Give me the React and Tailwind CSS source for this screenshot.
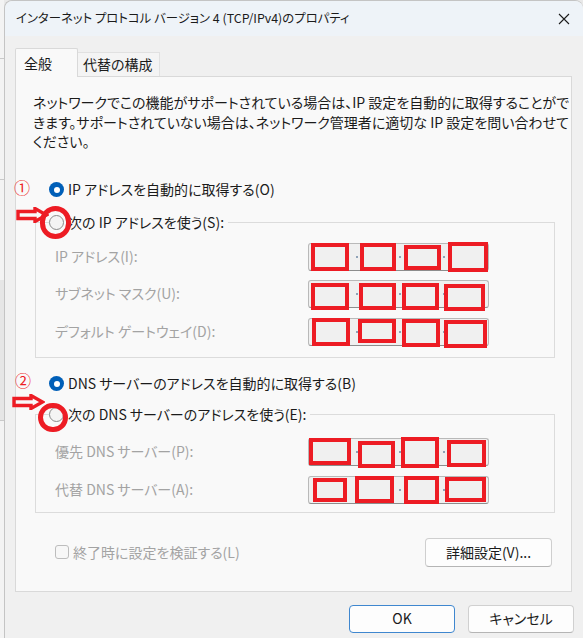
import React from 'react';

const FONT = "font-['Noto_Sans_CJK_JP','Noto_Sans',sans-serif] [font-feature-settings:'palt']";

// red annotation boxes drawn over each address field (left, top, width, height)
const RECTS = {
  ip: [[3, 0, 38, 28], [52, 0, 36, 28], [96, 2, 37, 25], [140, -1, 40, 30]],
  mask: [[3, 3, 38, 27], [51, 3, 37, 27], [94, 3, 37, 27], [136, 4, 41, 27]],
  gw: [[4, 0, 38, 28], [50, 1, 38, 24], [94, 1, 38, 28], [136, 2, 43, 28]],
  dns1: [[1, 0, 42, 27], [50, 3, 37, 27], [93, -1, 38, 31], [139, 2, 39, 27]],
  dns2: [[5, 2, 34, 24], [47, 0, 39, 27], [96, 0, 35, 28], [137, 1, 41, 25]],
};

function Radio({ checked }) {
  if (checked) {
    return (
      <span className="w-[15px] h-[15px] rounded-full bg-[#005fb8] flex items-center justify-center shrink-0">
        <span className="w-[6px] h-[6px] rounded-full bg-white" />
      </span>
    );
  }
  return <span className="w-[15px] h-[15px] rounded-full border border-[#8a8a8a] bg-[#f4f4f4] shrink-0" />;
}

function AddressField({ rects }) {
  return (
    <div className="relative w-[181px] h-[28px] border border-[#b9b9b9] border-b-[#8d8d8d] rounded-[3px] bg-[#f0f0f0]">
      {[47, 90, 134].map((x) => (
        <span key={x} className="absolute top-[12px] w-[2px] h-[2px] bg-[#8fa3b8]" style={{ left: x }} />
      ))}
      {rects.map(([l, t, w, h], i) => (
        <span
          key={i}
          className="absolute border-[4px] border-[#ed1c24]"
          style={{ left: l - 1, top: t - 1, width: w, height: h }}
        />
      ))}
    </div>
  );
}

function FieldRow({ label, rects, className = '' }) {
  return (
    <div className={'flex items-center h-[28px] ' + className}>
      <span className="w-[253px] text-[#a3a3a3] whitespace-nowrap">{label}</span>
      <AddressField rects={rects} />
    </div>
  );
}

function Arrow({ className }) {
  return (
    <svg className={className} width="33" height="16" viewBox="0 0 33 16" fill="none">
      <path d="M2 4.5 H19 V1.5 L30.5 8 L19 14.5 V11.5 H2 Z" stroke="#ed1c24" strokeWidth="3.4" strokeLinejoin="miter" />
    </svg>
  );
}

export default function App() {
  return (
    <div className={'w-[583px] h-[638px] flex bg-[#e9e9e9] overflow-hidden text-[14px] text-[#1b1b1b] ' + FONT}>
      {/* bit of the window behind */}
      <div className="w-[4px] shrink-0 flex flex-col bg-[#f3f3f3]">
        <div className="h-[58px]" />
        <div className="h-px bg-[#c9c9c9]" />
        <div className="h-[120px]" />
        <div className="h-px bg-[#c9c9c9]" />
        <div className="h-[100px]" />
        <div className="h-[140px] bg-[#e6e6e6]" />
        <div className="h-px bg-[#c9c9c9]" />
      </div>

      {/* dialog window */}
      <div className="relative flex-1 min-w-0 flex flex-col bg-[#f0f0f0] rounded-t-[8px] border-l border-t border-[#c4c4c4]">
        {/* title bar */}
        <div className="h-[35px] flex items-center justify-between pl-[11px] pr-[12px] bg-[#eef3f8] rounded-t-[8px]">
          <span className="text-[12.4px] whitespace-nowrap">インターネット プロトコル バージョン 4 (TCP/IPv4)のプロパティ</span>
          <svg width="12" height="12" viewBox="0 0 12 12" className="mr-[1px] shrink-0">
            <path d="M1 1 L11 11 M11 1 L1 11" stroke="#1b1b1b" strokeWidth="1.1" />
          </svg>
        </div>

        <div className="flex flex-col pl-[10px] pr-[11px]">
          {/* tabs */}
          <div className="flex items-end mt-[12px] h-[28px]">
            <div className="relative z-10 h-[29px] w-[63px] -mb-px pl-[8px] flex items-center border border-b-0 border-[#d9d9d9] bg-[#f9f9f9] rounded-t-[2px]">
              全般
            </div>
            <div className="h-[24px] w-[82px] flex items-center pl-[5px] border border-l-0 border-b-0 border-[#e1e1e1] bg-[#f4f4f4]">
              代替の構成
            </div>
          </div>

          {/* tab panel */}
          <div className="flex flex-col border border-[#d9d9d9] bg-[#f9f9f9] pl-[17px] pr-[16px] pt-[16px] pb-[24px]">
            <p className="leading-[19.5px] whitespace-nowrap">
              ネットワークでこの機能がサポートされている場合は、IP 設定を自動的に取得することがで
              <br />
              きます。サポートされていない場合は、ネットワーク管理者に適切な IP 設定を問い合わせて
              <br />
              ください。
            </p>

            <div className="relative flex items-center h-[20px] mt-[28px] ml-[16px] gap-[4px]">
              <span className="absolute left-[-35px] top-[-3px] text-[#ed1c24] text-[16px] leading-[20px]">①</span>
              <Radio checked />
              <span className="whitespace-nowrap">IP アドレスを自動的に取得する(O)</span>
            </div>

            <fieldset className="relative mt-[13px] ml-[2px] border border-[#dcdcdc] pl-[19px] pb-[11px]">
              <legend className="relative -ml-[6px] pr-[4px] h-[20px] flex items-center gap-[4px]">
                <Arrow className="absolute left-[-33px] top-[-6px]" />
                <span className="absolute left-[-9px] top-[-7px] w-[31px] h-[33px] rounded-full border-[5px] border-[#ed1c24]" />
                <Radio />
                <span className="whitespace-nowrap">次の IP アドレスを使う(S):</span>
              </legend>
              <FieldRow className="mt-[10px]" label="IP アドレス(I):" rects={RECTS.ip} />
              <FieldRow className="mt-[9px]" label="サブネット マスク(U):" rects={RECTS.mask} />
              <FieldRow className="mt-[10px]" label="デフォルト ゲートウェイ(D):" rects={RECTS.gw} />
            </fieldset>

            <div className="relative flex items-center h-[20px] mt-[16px] ml-[16px] gap-[4px]">
              <span className="absolute left-[-34px] top-[-4px] text-[#ed1c24] text-[16px] leading-[20px]">②</span>
              <Radio checked />
              <span className="whitespace-nowrap">DNS サーバーのアドレスを自動的に取得する(B)</span>
            </div>

            <fieldset className="relative mt-[11px] ml-[2px] border border-[#dcdcdc] pl-[19px] pb-[8px]">
              <legend className="relative -ml-[6px] pr-[4px] h-[20px] flex items-center gap-[4px]">
                <Arrow className="absolute left-[-37px] top-[-11px]" />
                <span className="absolute left-[-11px] top-[-2px] w-[30px] h-[29px] rounded-full border-[5px] border-[#ed1c24]" />
                <Radio />
                <span className="whitespace-nowrap">次の DNS サーバーのアドレスを使う(E):</span>
              </legend>
              <FieldRow className="mt-[13px]" label="優先 DNS サーバー(P):" rects={RECTS.dns1} />
              <FieldRow className="mt-[10px]" label="代替 DNS サーバー(A):" rects={RECTS.dns2} />
            </fieldset>

            <div className="flex items-center justify-between mt-[25px] ml-[22px] mr-[3px]">
              <div className="flex items-center gap-[4px] text-[#a3a3a3]">
                <span className="w-[14px] h-[14px] border border-[#bdbdbd] rounded-[3px] bg-[#f7f7f7]" />
                <span className="whitespace-nowrap">終了時に設定を検証する(L)</span>
              </div>
              <button className="w-[127px] h-[29px] border border-[#cfcfcf] border-b-[#b5b5b5] rounded-[4px] bg-[#fdfdfd] text-[14px]">
                詳細設定(V)...
              </button>
            </div>
          </div>

          {/* dialog buttons */}
          <div className="flex justify-end gap-[13px] mt-[13px] -mr-[2px]">
            <button className="w-[106px] h-[28px] border border-[#3f87cf] rounded-[4px] bg-[#fdfdfd] text-[14px]">OK</button>
            <button className="w-[106px] h-[28px] border border-[#d0d0d0] border-b-[#b5b5b5] rounded-[4px] bg-[#fdfdfd] text-[14px]">
              キャンセル
            </button>
          </div>
        </div>
      </div>
    </div>
  );
}
